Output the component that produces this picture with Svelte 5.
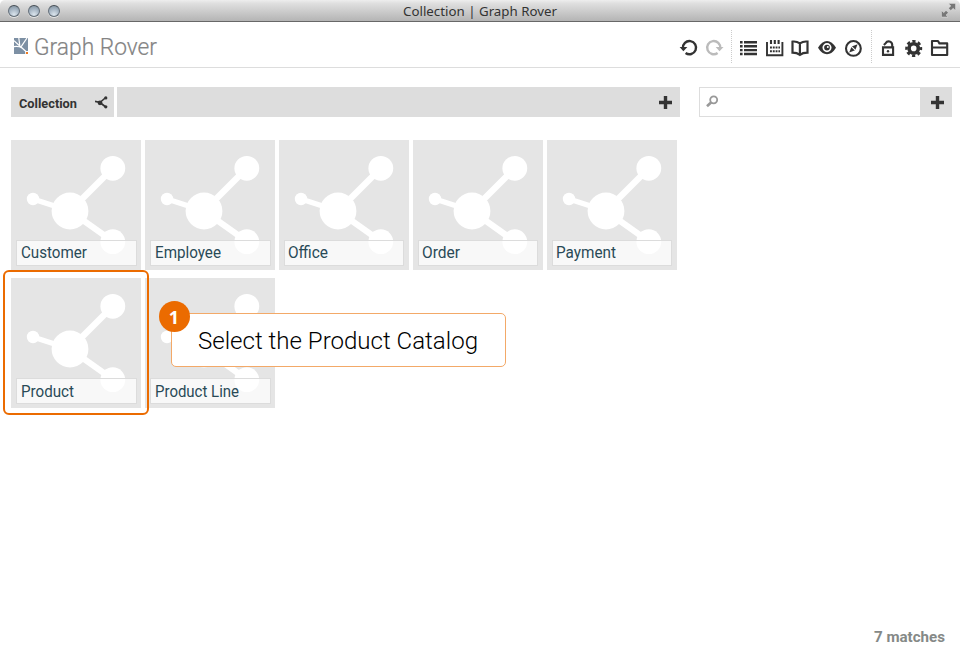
<script>
  const cards = ['Customer', 'Employee', 'Office', 'Order', 'Payment', 'Product', 'Product Line'];
  const widths = [66, 66, 40, 38, 60, 53, 84];
</script>

{#snippet plus()}
  <svg width="13" height="13" viewBox="0 0 13 13"><path d="M6.5 0v13M0 6.5h13" stroke="#333" stroke-width="3.4" /></svg>
{/snippet}

{#snippet text(value, width, cls)}
  <svg class="text {cls}" width={width + 4} height="30"><text x="0" y="20" textLength={width} lengthAdjust="spacingAndGlyphs">{value}</text></svg>
{/snippet}

<div class="window">
  <div class="titlebar">
    <div class="lights"><i></i><i></i><i></i></div>
    <div class="title">{@render text('Collection | Graph Rover', 154, 'wintitle')}</div>
    <svg class="full" width="15" height="15" viewBox="0 0 15 15">
      <path d="M7.5 .5h7v7l-2.3-2.3-2.4 2.3-2.3-2.3 2.4-2.3zM7 14H.5V7.5l2.2 2.2L5 7.4l2.4 2.3L5 12z" fill="#777" stroke="#eee" stroke-width=".4" />
    </svg>
  </div>

  <header>
    <svg class="logo" width="15" height="17" viewBox="0 0 15 17">
      <path d="M0 0h14v16H0z" fill="#7d90a4" />
      <path d="M0 2.6l8 7.4M4.8 0l1 7.6M13 0L7 8.8M0 8.6q5-.6 8 1.4M7 9l6 5.5" stroke="#fff" stroke-width="1.2" fill="none" />
      <path d="M11.2 13H15v4h-3.8z" fill="#fff" /><path d="M12 14h2v2h-2z" fill="#ee7a20" />
    </svg>
    {@render text('Graph Rover', 123, 'brand')}
    <div class="tools">
      <div class="group">
        <svg viewBox="0 0 26 20">
          <path d="M6.9 10.3A6.6 6.6 0 1 1 9.6 15" fill="none" stroke="#333" stroke-width="2.4" />
          <path d="M3.6 9.1h7.8L7.4 13.3z" fill="#333" />
        </svg>
        <svg viewBox="0 0 26 20">
          <path d="M18.3 10.3A6.6 6.6 0 1 0 15.6 15" fill="none" stroke="#bbb" stroke-width="2.4" />
          <path d="M13.7 9.1h7.8l-4 4.2z" fill="#bbb" />
        </svg>
      </div>
      <div class="sep"></div>
      <div class="group">
        <svg viewBox="0 0 26 20"><path d="M4 4.3h2.6M8 4.3h13M4 8.2h2.6M8 8.2h13M4 12.1h2.6M8 12.1h13M4 16h2.6M8 16h13" stroke="#333" stroke-width="2.4" /></svg>
        <svg viewBox="0 0 26 20">
          <path d="M5 4v13.2h15.4V4" fill="none" stroke="#333" stroke-width="1.9" />
          <path d="M9 2v4M12.8 2v4M16.6 2v4" stroke="#333" stroke-width="2.1" />
          <path d="M8 9.5h10M8 13.2h10" stroke="#333" stroke-width="1.9" stroke-dasharray="1.9 .9" />
        </svg>
        <svg viewBox="0.5 0 26 20"><path d="M12.4 5.4Q9 3.1 5 3.6v11q4.5 0 7.4 2.2Q15.2 14.6 20 14.6v-11q-4.3-.5-7.6 1.8zM12.4 5.4v11" fill="none" stroke="#333" stroke-width="2.2" /></svg>
        <svg viewBox="0 0 26 20">
          <path d="M4 9.8Q8 3 13 3t9 6.8q-4 6.5-9 6.5T4 9.8z" fill="#333" />
          <circle cx="13" cy="9.6" r="3.7" fill="none" stroke="#fff" stroke-width="1.7" />
          <circle cx="13.8" cy="8.9" r="1" fill="#fff" />
        </svg>
        <svg viewBox="0 0 26 20">
          <circle cx="13.4" cy="10.4" r="7.4" fill="none" stroke="#333" stroke-width="2.1" />
          <path d="M17.6 6.2l-2.4 6L9.2 14.6l2.4-6z" fill="#333" /><path d="M11 8.2l4.8 4.5" stroke="#fff" stroke-width="1.1" />
        </svg>
      </div>
      <div class="sep"></div>
      <div class="group">
        <svg viewBox="0 0 26 20">
          <path d="M8 9.4h10.1v7.5H8zM17.2 9V6.6a3.5 3.5 0 0 0-6.5-1.5L8.9 7" fill="none" stroke="#333" stroke-width="2.1" />
          <circle cx="13" cy="13.2" r="1.2" fill="#333" />
        </svg>
        <svg viewBox="0 0 26 20">
          <circle cx="12.7" cy="10.4" r="4.6" fill="none" stroke="#333" stroke-width="3.6" />
          <circle cx="12.7" cy="10.4" r="7.2" fill="none" stroke="#333" stroke-width="2.6" stroke-dasharray="3.2 2.455" stroke-dashoffset="1.6" />
        </svg>
        <svg viewBox="0 0 26 20"><path d="M5 17V3h6l1.4 2.4h7.8V17zM5 9.5h15" fill="none" stroke="#333" stroke-width="2.1" stroke-linejoin="round" /></svg>
      </div>
    </div>
  </header>

  <div class="bar">
    <div class="tab">
      {@render text('Collection', 58, 'tabname')}
      <svg width="13" height="13" viewBox="0 0 13 13">
        <path d="M0 5.4L5 6.5 10.7 1.5M5 6.5l5.7 4.5" fill="none" stroke="#333" stroke-width="1.6" />
        <circle cx="5" cy="6.8" r="2.4" fill="#333" /><circle cx="10.8" cy="1.9" r="1.6" fill="#333" /><circle cx="10.8" cy="10.8" r="1.6" fill="#333" />
      </svg>
    </div>
    <div class="strip">{@render plus()}</div>
    <div class="search">
      <svg class="glass" width="13" height="13" viewBox="0 0 13 13">
        <circle cx="7.7" cy="4.8" r="3.5" fill="none" stroke="#999" stroke-width="1.8" />
        <path d="M5.3 7.2L1 11.2" stroke="#999" stroke-width="2.6" />
      </svg>
      <div class="add">{@render plus()}</div>
    </div>
  </div>

  <main>
    {#each cards as name, i}
      <div class="card" class:lower={i > 4} class:narrow={i > 1 && i < 5}>
        <svg class="graph" width="130" height="130" viewBox="0 0 130 130">
          <g stroke="#fff"><path d="M59 71l43-43M59 71l43 30.5" stroke-width="6.4" /><path d="M22 59l37 12" stroke-width="5.4" /></g>
          <g fill="#fff"><circle cx="59" cy="71" r="18.4" /><circle cx="101.8" cy="28.3" r="12.4" /><circle cx="101.8" cy="101.7" r="12.4" /><circle cx="22" cy="59" r="6.2" /></g>
        </svg>
        <div class="label">{@render text(name, widths[i], 'name')}</div>
        {#if name === 'Product'}<div class="ring"></div>{/if}
        {#if name === 'Product Line'}
          <div class="tip">{@render text('Select the Product Catalog', 280, 'tiptext')}<div class="badge">1</div></div>
        {/if}
      </div>
    {/each}
  </main>

  <footer>{@render text('7 matches', 71, 'matches')}</footer>
</div>

<style>
  :global(body) { margin: 0; background: #fff; }
  .window { width: 960px; height: 662px; display: flex; flex-direction: column; font-family: Roboto, sans-serif; }
  svg { display: block; flex: none; }
  .text { overflow: visible; }
  .titlebar { height: 22px; box-sizing: border-box; display: flex; align-items: center; background: linear-gradient(#eee, #e0e0e0 15%, #b4b4b4); border-bottom: 1px solid #686868; border-radius: 5px 5px 0 0; flex: none; }
  .lights { display: flex; gap: 8px; padding-left: 8px; width: 395px; box-sizing: border-box; }
  .lights i { width: 12px; height: 12px; box-sizing: border-box; border-radius: 50%; border: 1px solid #65707a; border-top-color: #454c54; background: radial-gradient(circle at 50% 85%, #dce5ed, #a5b4c2 55%, #7d8c99); box-shadow: 0 1px 0 #e5e5e5; }
  .title { width: 546px; }
  .wintitle { margin-left: 8px; height: 30px; font: 13px "Noto Sans", sans-serif; fill: #333; }
  header { height: 46px; box-sizing: border-box; border-bottom: 1px solid #ddd; display: flex; flex: none; }
  .logo { margin: 16px 0 0 14px; }
  .brand { margin: 13px 0 0 5px; font-size: 24px; font-weight: 300; fill: #848484; stroke: #848484; stroke-width: .2px; }
  .tools { display: flex; margin-left: auto; padding: 8px 7px 0 0; }
  .group { display: flex; padding-top: 8px; }
  .group svg { width: 26px; height: 20px; }
  .sep { width: 0; height: 33px; border-left: 1px dotted #ccc; margin: 0 4px 0 3px; }
  .sep + .group + .sep { margin: 0 3px 0 5px; }
  .bar { display: flex; height: 30px; margin: 19px 8px 0 11px; flex: none; }
  .tab { width: 103px; background: #ddd; display: flex; align-items: center; }
  .tabname { margin: 2px 14px 0 8px; font-size: 13.5px; font-weight: 700; fill: #333; }
  .strip { width: 563px; margin-left: 3px; background: #ddd; display: flex; align-items: center; justify-content: flex-end; padding-right: 8px; box-sizing: border-box; }
  .search { width: 253px; margin-left: 19px; box-sizing: border-box; border: 1px solid #ddd; display: flex; align-items: center; justify-content: space-between; padding-left: 6px; }
  .glass { margin-bottom: 2px; }
  .add { width: 31px; padding-left: 3px; box-sizing: border-box; align-self: stretch; background: #ddd; display: flex; align-items: center; justify-content: center; }
  main { display: grid; grid-template-columns: repeat(5, 130px); column-gap: 4px; row-gap: 8px; margin: 23px 0 0 11px; }
  .card { height: 130px; background: #e5e5e5; position: relative; }
  .label { position: absolute; left: 5px; top: 100px; width: 121px; height: 26px; box-sizing: border-box; border: 1px solid #dcdcdc; background: rgba(255, 255, 255, .72); }
  .narrow .label { width: 120px; }
  .name { margin: -3px 0 0 3.5px; font-size: 16px; fill: #294a57; }
  .narrow .name { margin-left: 2.8px; }
  .lower .name { margin-top: -2px; }
  .ring { position: absolute; z-index: 1; left: -8px; top: -8px; width: 146px; height: 145px; box-sizing: border-box; border: 2px solid #eb6b00; border-radius: 6px; }
  .tip { position: absolute; z-index: 2; left: 26px; top: 35px; width: 335px; height: 54px; box-sizing: border-box; border: 1px solid #f3a968; border-radius: 5px; background: #fff; }
  .tiptext { margin: 15px 0 0 25.5px; font-size: 24px; font-weight: 300; fill: #000; }
  .badge { position: absolute; left: -13px; top: -13px; width: 31px; height: 31px; border-radius: 50%; background: #eb6b00; color: #fff; font: 700 18px/33px "Open Sans", sans-serif; text-align: center; text-indent: -1px; }
  footer { margin: auto 11px 10px auto; }
  .matches { font-size: 15.5px; font-weight: 700; fill: #858987; }
</style>
